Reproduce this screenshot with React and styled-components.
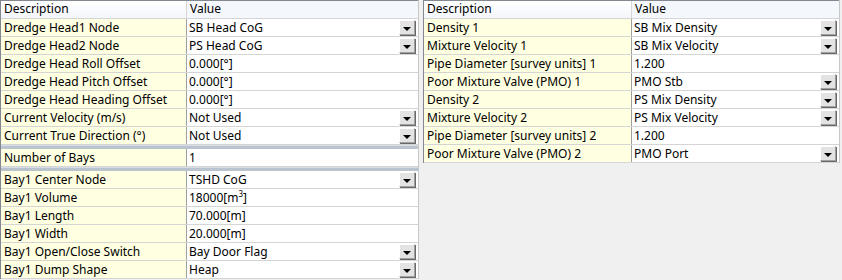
import React from 'react';
import styled, { createGlobalStyle } from 'styled-components';

const GlobalStyle = createGlobalStyle`
  html, body {
    margin: 0;
    padding: 0;
    background: #f0f0f0;
  }
  body {
    font-family: "Noto Sans", "Open Sans", sans-serif;
    font-size: 12px;
    color: #000;
  }
`;

const headGrid = [
  { label: 'Dredge Head1 Node', value: 'SB Head CoG', combo: true },
  { label: 'Dredge Head2 Node', value: 'PS Head CoG', combo: true },
  { label: 'Dredge Head Roll Offset', value: '0.000[°]' },
  { label: 'Dredge Head Pitch Offset', value: '0.000[°]' },
  { label: 'Dredge Head Heading Offset', value: '0.000[°]' },
  { label: 'Current Velocity (m/s)', value: 'Not Used', combo: true },
  { label: 'Current True Direction (°)', value: 'Not Used', combo: true },
];

const bayGrid = [
  { label: 'Bay1 Center Node', value: 'TSHD CoG', combo: true },
  { label: 'Bay1 Volume', value: <>18000[m<sup>3</sup>]</> },
  { label: 'Bay1 Length', value: '70.000[m]' },
  { label: 'Bay1 Width', value: '20.000[m]' },
  { label: 'Bay1 Open/Close Switch', value: 'Bay Door Flag', combo: true },
  { label: 'Bay1 Dump Shape', value: 'Heap', combo: true },
];

const pipeGrid = [
  { label: 'Density 1', value: 'SB Mix Density', combo: true },
  { label: 'Mixture Velocity 1', value: 'SB Mix Velocity', combo: true },
  { label: 'Pipe Diameter [survey units] 1', value: '1.200' },
  { label: 'Poor Mixture Valve (PMO) 1', value: 'PMO Stb', combo: true },
  { label: 'Density 2', value: 'PS Mix Density', combo: true },
  { label: 'Mixture Velocity 2', value: 'PS Mix Velocity', combo: true },
  { label: 'Pipe Diameter [survey units] 2', value: '1.200' },
  { label: 'Poor Mixture Valve (PMO) 2', value: 'PMO Port', combo: true },
];

function App() {
  return (
    <>
      <GlobalStyle />
      <Page>
        <Pane $width={417}>
          <Grid $first>
            <HeaderRow $desc={186}>
              <HeaderCell>Description</HeaderCell>
              <HeaderCell $value>Value</HeaderCell>
            </HeaderRow>
            {headGrid.map((r) => (
              <PropRow key={r.label} row={r} desc={186} />
            ))}
          </Grid>
          <Splitter />
          <Grid>
            <PropRow row={{ label: 'Number of Bays', value: '1' }} desc={186} />
          </Grid>
          <Splitter />
          <Grid>
            {bayGrid.map((r) => (
              <PropRow key={r.label} row={r} desc={186} />
            ))}
          </Grid>
        </Pane>
        <Gutter />
        <Pane $width={415}>
          <Grid $first>
            <HeaderRow $desc={208}>
              <HeaderCell>Description</HeaderCell>
              <HeaderCell $value>Value</HeaderCell>
            </HeaderRow>
            {pipeGrid.map((r) => (
              <PropRow key={r.label} row={r} desc={208} />
            ))}
          </Grid>
        </Pane>
      </Page>
    </>
  );
}

function PropRow({ row, desc }) {
  return (
    <Row $desc={desc}>
      <DescCell>{row.label}</DescCell>
      <ValueCell>
        <ValueText>{row.value}</ValueText>
        {row.combo && (
          <DropButton>
            <Arrow />
          </DropButton>
        )}
      </ValueCell>
    </Row>
  );
}

const Page = styled.div`
  display: flex;
  align-items: flex-start;
  width: 842px;
  height: 280px;
  overflow: hidden;
  background: #f0f0f0;
`;

const Pane = styled.div`
  display: flex;
  flex-direction: column;
  width: ${(p) => p.$width}px;
  flex-shrink: 0;
  border-left: 1px solid #828790;
  border-right: 1px solid #c8c8c8;
`;

const Gutter = styled.div`
  width: 4px;
  flex-shrink: 0;
`;

const Grid = styled.div`
  display: flex;
  flex-direction: column;
  border-top: ${(p) => (p.$first ? '1px solid #828790' : 'none')};
`;

const Splitter = styled.div`
  height: 3px;
  background: #bac4ce;
  border-top: 1px solid #d6dde3;
`;

const HeaderRow = styled.div`
  display: grid;
  grid-template-columns: ${(p) => p.$desc}px 1fr;
  height: 17px;
  background: linear-gradient(#ffffff, #f3f6fb);
  border-bottom: 1px solid #d5d5d5;
`;

const HeaderCell = styled.div`
  padding-left: 3px;
  line-height: 16px;
  border-right: ${(p) => (p.$value ? 'none' : '1px solid #d5d5d5')};
  background: ${(p) => (p.$value ? '#f4f7fc' : 'transparent')};
  white-space: nowrap;
`;

const Row = styled.div`
  display: grid;
  grid-template-columns: ${(p) => p.$desc}px 1fr;
  height: 18px;
  border-bottom: 1px solid #d5d5d5;
  box-sizing: border-box;
`;

const DescCell = styled.div`
  background: #ffffe1;
  border-right: 1px solid #a0a0a0;
  padding-left: 3px;
  line-height: 17px;
  white-space: nowrap;
  overflow: hidden;
`;

const ValueCell = styled.div`
  display: flex;
  align-items: center;
  background: #ffffff;
  padding-left: 2px;
  min-width: 0;
`;

const ValueText = styled.span`
  flex: 1;
  line-height: 17px;
  white-space: nowrap;
  overflow: hidden;

  sup {
    font-size: 8px;
    vertical-align: 5px;
    line-height: 0;
  }
`;

const DropButton = styled.div`
  display: flex;
  align-items: center;
  justify-content: center;
  width: 16px;
  height: 15px;
  box-sizing: border-box;
  margin-right: 3px;
  background: #e3e3e3;
  border-top: 1px solid #ffffff;
  border-left: 1px solid #ffffff;
  border-right: 1px solid #a0a0a0;
  border-bottom: 1px solid #a0a0a0;
  box-shadow: 1px 1px 0 #696969;
`;

const Arrow = styled.div`
  width: 0;
  height: 0;
  margin-top: 2px;
  border-left: 4px solid transparent;
  border-right: 4px solid transparent;
  border-top: 4px solid #000;
`;

export default App;
